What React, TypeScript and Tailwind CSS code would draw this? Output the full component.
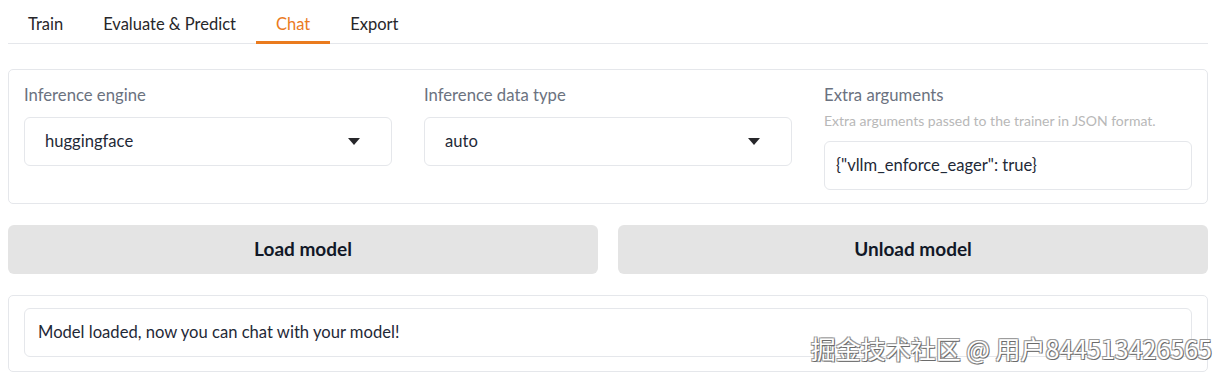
import React from "react";

const font = { fontFamily: '"Source Sans Pro", Lato, "Noto Sans", sans-serif' };

function Caret() {
  return (
    <svg width="12" height="7" viewBox="0 0 12 7" className="shrink-0">
      <path d="M0 0 L12 0 L6 7 Z" fill="#27272a" />
    </svg>
  );
}

function SelectBox({ label, value }: { label: string; value: string }) {
  return (
    <div className="flex flex-col">
      <div className="text-[16.7px] leading-[20px] text-[#6b7280] mb-[12px]">{label}</div>
      <div className="h-[49px] border border-[#e5e7eb] rounded-[6px] bg-white flex items-center justify-between pl-[20px] pr-[31px]">
        <span className="text-[16.6px] text-[#1f2937]">{value}</span>
        <Caret />
      </div>
    </div>
  );
}

export default function App() {
  const tabs = ["Train", "Evaluate & Predict", "Chat", "Export"];
  return (
    <div className="relative w-[1226px] h-[377px] bg-white pl-2 pr-[18px] overflow-hidden" style={font}>
      <div className="flex h-[44px] border-b border-[#e5e7eb]">
        {tabs.map((t) => (
          <div
            key={t}
            className={
              "h-[44px] px-5 pt-[7px] flex items-center border-b-[3px] text-[16.5px] " +
              (t === "Chat"
                ? "border-[#ea7b1e] text-[#ea7b1e]"
                : "border-transparent text-[#27272a]")
            }
          >
            {t}
          </div>
        ))}
      </div>

      <div className="mt-[25px] border border-[#e5e7eb] rounded-[5px] pt-[15px] px-[15px] pb-[13px] grid grid-cols-3 gap-8">
        <SelectBox label="Inference engine" value="huggingface" />
        <SelectBox label="Inference data type" value="auto" />
        <div className="flex flex-col">
          <div className="text-[16.7px] leading-[20px] text-[#6b7280]">Extra arguments</div>
          <div className="text-[14px] leading-[18px] text-[#b8b8b8] mt-[7px] whitespace-nowrap">
            Extra arguments passed to the trainer in JSON format.
          </div>
          <div className="mt-[11px] h-[49px] border border-[#e5e7eb] rounded-[6px] flex items-center px-[11px] text-[16.6px] text-[#1f2937]">
            {'{"vllm_enforce_eager": true}'}
          </div>
        </div>
      </div>

      <div className="mt-[21px] grid grid-cols-2 gap-5">
        <button className="h-[49px] rounded-[6px] bg-[#e4e4e4] text-[19px] font-bold text-[#111827]">
          Load model
        </button>
        <button className="h-[49px] rounded-[6px] bg-[#e4e4e4] text-[19px] font-bold text-[#111827]">
          Unload model
        </button>
      </div>

      <div className="mt-[21px] border border-[#e5e7eb] rounded-[5px] pt-[12px] px-[15px] pb-[14px]">
        <div className="h-[49px] border border-[#e5e7eb] rounded-[6px] flex items-center px-[13px] text-[16.6px] text-[#1f2937]">
          Model loaded, now you can chat with your model!
        </div>
      </div>

      <div
        className="absolute right-[14px] top-[331px] text-[25px] leading-[34px] text-white whitespace-nowrap"
        style={{
          fontFamily: '"Noto Sans CJK SC", "Noto Sans", sans-serif',
          textShadow:
            "1px 1px 0 #6b6b6b, -1px -1px 0 #9a9a9a, 1px -1px 0 #9a9a9a, -1px 1px 0 #9a9a9a",
        }}
      >
        掘金技术社区 @ 用户844513426565
      </div>
    </div>
  );
}
